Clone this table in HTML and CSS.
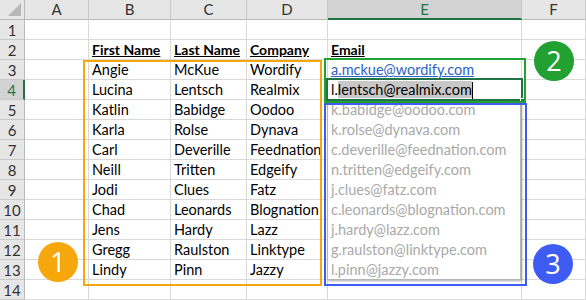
FILE: index.html
```html
<!DOCTYPE html>
<html>
<head>
<meta charset="utf-8">
<link rel="stylesheet" href="styles.css">
</head>
<body>
<div class="sheet">
  <div class="grid">
    <div class="hc corner"><span class="tri"></span></div>
    <div class="hc">A</div><div class="hc">B</div><div class="hc">C</div><div class="hc">D</div><div class="hc sel-col">E</div><div class="hc">F</div>

    <div class="rh">1</div><div class="c"></div><div class="c"></div><div class="c"></div><div class="c"></div><div class="c"></div><div class="c"></div>
    <div class="rh">2</div><div class="c"></div><div class="c th">First Name</div><div class="c th">Last Name</div><div class="c th">Company</div><div class="c th">Email</div><div class="c"></div>
    <div class="rh">3</div><div class="c"></div><div class="c">Angie</div><div class="c">McKue</div><div class="c">Wordify</div><div class="c link">a.mckue@wordify.com</div><div class="c"></div>
    <div class="rh sel-row">4</div><div class="c"></div><div class="c">Lucina</div><div class="c">Lentsch</div><div class="c">Realmix</div><div class="c edit">l.<span class="hl">lentsch@realmix.com</span><span class="caret"></span></div><div class="c"></div>
    <div class="rh">5</div><div class="c"></div><div class="c">Katlin</div><div class="c">Babidge</div><div class="c">Oodoo</div><div class="c"></div><div class="c"></div>
    <div class="rh">6</div><div class="c"></div><div class="c">Karla</div><div class="c">Rolse</div><div class="c">Dynava</div><div class="c"></div><div class="c"></div>
    <div class="rh">7</div><div class="c"></div><div class="c">Carl</div><div class="c">Deverille</div><div class="c">Feednation</div><div class="c"></div><div class="c"></div>
    <div class="rh">8</div><div class="c"></div><div class="c">Neill</div><div class="c">Tritten</div><div class="c">Edgeify</div><div class="c"></div><div class="c"></div>
    <div class="rh">9</div><div class="c"></div><div class="c">Jodi</div><div class="c">Clues</div><div class="c">Fatz</div><div class="c"></div><div class="c"></div>
    <div class="rh">10</div><div class="c"></div><div class="c">Chad</div><div class="c">Leonards</div><div class="c">Blognation</div><div class="c"></div><div class="c"></div>
    <div class="rh">11</div><div class="c"></div><div class="c">Jens</div><div class="c">Hardy</div><div class="c">Lazz</div><div class="c"></div><div class="c"></div>
    <div class="rh">12</div><div class="c"></div><div class="c">Gregg</div><div class="c">Raulston</div><div class="c">Linktype</div><div class="c"></div><div class="c"></div>
    <div class="rh">13</div><div class="c"></div><div class="c">Lindy</div><div class="c">Pinn</div><div class="c">Jazzy</div><div class="c"></div><div class="c"></div>
    <div class="rh">14</div><div class="c"></div><div class="c"></div><div class="c"></div><div class="c"></div><div class="c"></div><div class="c"></div>
  </div>

  <div class="preview">
    <div class="pl">k.babidge@oodoo.com</div>
    <div class="pl">k.rolse@dynava.com</div>
    <div class="pl">c.deverille@feednation.com</div>
    <div class="pl">n.tritten@edgeify.com</div>
    <div class="pl">j.clues@fatz.com</div>
    <div class="pl">c.leonards@blognation.com</div>
    <div class="pl">j.hardy@lazz.com</div>
    <div class="pl">g.raulston@linktype.com</div>
    <div class="pl">l.pinn@jazzy.com</div>
  </div>

  <div class="active"><span class="handle"></span></div>
  <div class="box box-orange"></div>
  <div class="box box-green"></div>
  <div class="box box-blue"></div>
  <div class="badge b-orange">1</div>
  <div class="badge b-green">2</div>
  <div class="badge b-blue">3</div>
</div>
</body>
</html>
```
FILE: styles.css
```css
* { box-sizing: border-box; }
html, body { margin: 0; padding: 0; background: #fff; }
.sheet {
  position: relative;
  width: 586px;
  height: 300px;
  overflow: hidden;
  font-family: Lato, "Liberation Sans", sans-serif;
}
.grid {
  display: grid;
  grid-template-columns: 25px 64px 82px 76px 81px 194px 64px;
  grid-auto-rows: 20px;
}
.hc {
  background: #e6e6e6;
  border-right: 1px solid #c9c9c9;
  border-bottom: 1px solid #b9b9b9;
  font-size: 15px;
  color: #333;
  text-align: center;
  line-height: 19px;
}
.corner { position: relative; border-right-color: #b9b9b9; }
.tri {
  position: absolute;
  right: 3px;
  bottom: 3px;
  width: 0; height: 0;
  border-style: solid;
  border-width: 0 0 13px 13px;
  border-color: transparent transparent #b8b8b8 transparent;
}
.sel-col {
  background: #d3d3d3;
  color: #217346;
  border-bottom: 2px solid #217346;
}
.rh {
  background: #e6e6e6;
  border-right: 1px solid #b9b9b9;
  border-bottom: 1px solid #c9c9c9;
  font-size: 15px;
  color: #333;
  text-align: center;
  line-height: 20px;
}
.sel-row {
  background: #d3d3d3;
  color: #217346;
  border-right: 2px solid #217346;
}
.c {
  border-right: 1px solid #d9d9d9;
  border-bottom: 1px solid #d9d9d9;
  font-size: 14.5px;
  line-height: 20px;
  padding: 0 3px;
  color: #000;
  white-space: nowrap;
}
.th { font-weight: bold; text-decoration: underline; font-size: 14px; }
.link { color: #2c63c6; text-decoration: underline; }
.edit { position: relative; }
.hl { background: #c8c8c8; }
.caret {
  display: inline-block;
  width: 1px;
  height: 17px;
  background: #000;
  vertical-align: -4px;
}
.preview {
  position: absolute;
  left: 327px;
  top: 99px;
  width: 194px;
  height: 181px;
  background: #fff;
  border: 1px solid #b5b5b5;
  box-shadow: 1px 1px 2px rgba(0,0,0,0.35);
}
.pl {
  height: 20px;
  line-height: 20px;
  font-size: 14.5px;
  color: #a9a9a9;
  padding-left: 3px;
  white-space: nowrap;
}
.active {
  position: absolute;
  left: 326px;
  top: 78px;
  width: 197px;
  height: 23px;
  border: 2px solid #217346;
}
.handle {
  position: absolute;
  right: -4px;
  bottom: -4px;
  width: 5px;
  height: 5px;
  background: #217346;
  border: 1px solid #fff;
}
.box { position: absolute; border: 2px solid; }
.box-orange { left: 83px; top: 60px; width: 239px; height: 226px; border-color: #f5a70b; }
.box-green { left: 324px; top: 58px; width: 202px; height: 45px; border-color: #23a032; }
.box-blue { left: 324px; top: 103px; width: 203px; height: 183px; border-color: #3f5cf2; }
.badge {
  position: absolute;
  width: 40px;
  height: 40px;
  border-radius: 50%;
  color: #fff;
  font-family: "Open Sans", "Liberation Sans", sans-serif;
  font-size: 27px;
  line-height: 40px;
  text-align: center;
}
.b-orange { left: 38px; top: 242px; background: #f5a70b; }
.b-green { left: 534px; top: 41px; background: #23a032; }
.b-blue { left: 533px; top: 244px; background: #3f5cf2; }
```
